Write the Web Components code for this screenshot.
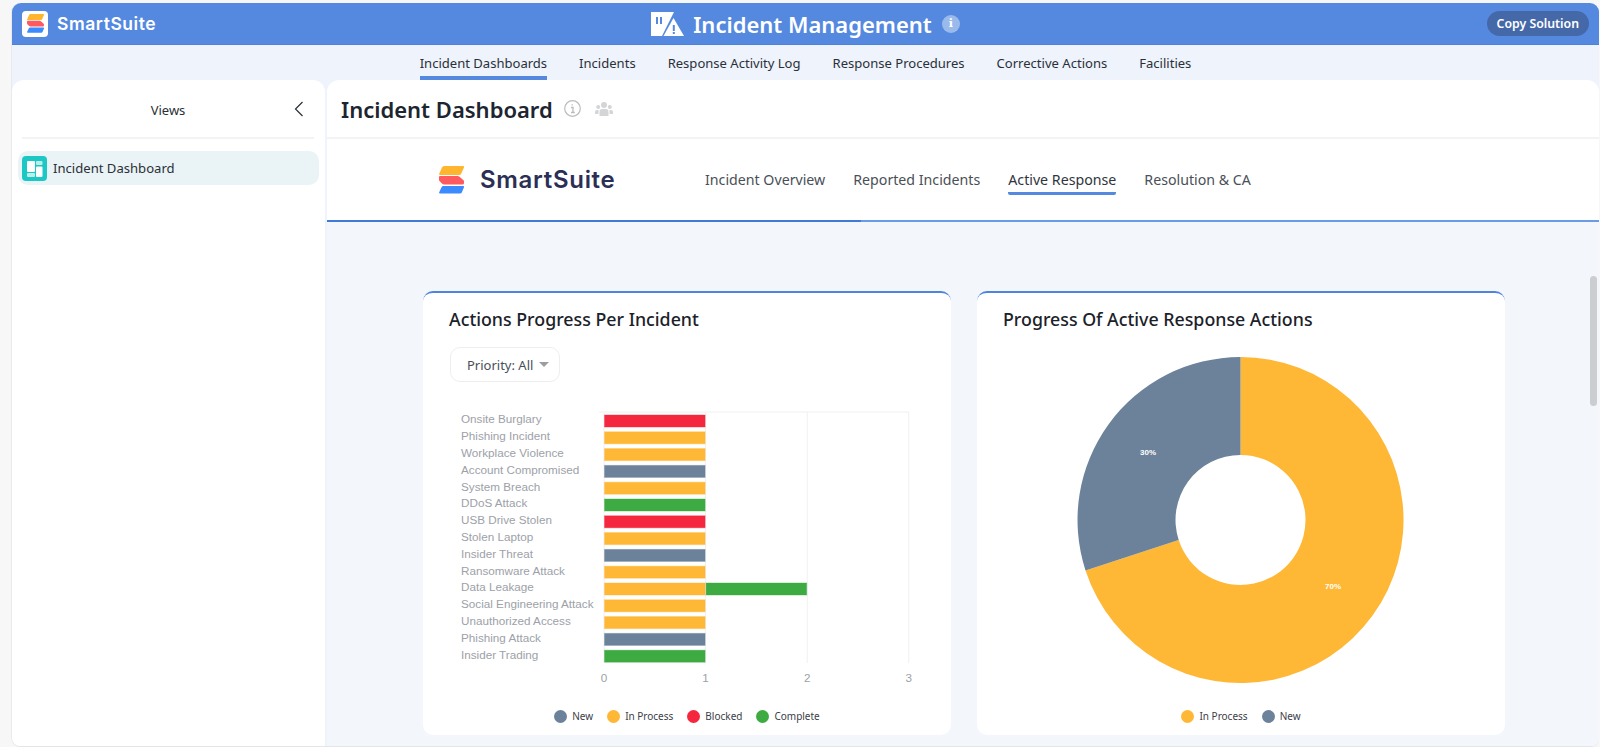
<!DOCTYPE html>
<html lang="en">
<head>
<meta charset="utf-8">
<title>Incident Management</title>
<style>
  html, body { margin: 0; height: 100%; overflow: hidden; }
  body {
    background: #f7f7f8;
    font-family: "Noto Sans", "Open Sans", sans-serif;
    color: #1f2733;
  }
</style>
</head>
<body>
<ss-app>
  <ss-header slot="header" title-text="Incident Management"></ss-header>
  <ss-tabs slot="tabs"></ss-tabs>
  <ss-sidebar slot="sidebar">
    <ss-view-item>Incident Dashboard</ss-view-item>
  </ss-sidebar>
  <ss-main slot="main" heading="Incident Dashboard">
    <ss-dash-nav></ss-dash-nav>
    <ss-dashboard>
      <ss-card heading="Actions Progress Per Incident">
        <ss-select>Priority: All</ss-select>
        <ss-bar-chart></ss-bar-chart>
        <ss-legend items="New:#6b829a,In Process:#ffb736,Blocked:#f4273f,Complete:#3dab41"></ss-legend>
      </ss-card>
      <ss-card heading="Progress Of Active Response Actions">
        <ss-donut-chart></ss-donut-chart>
        <ss-legend items="In Process:#ffb736,New:#6b829a"></ss-legend>
      </ss-card>
    </ss-dashboard>
  </ss-main>
</ss-app>

<script>
const LOGO_MARK = `
  <path d="M5 0H24Q25.500 0 25 1.500L22 8Q21.500 9 20 9H1Q-.3 9 .2 7.800L3 1.500Q3.700 0 5 0Z" fill="#ffb52e"/>
  <path d="M1 10H18.500Q19.500 10 20.500 10.800L24.500 14.200Q25 14.800 25 15.500V17Q25 18.500 23.500 18.500H5Q4 18.500 3.200 17.800L.5 15Q0 14.500 0 13.500V11Q0 10 1 10Z" fill="#ff5a5f"/>
  <path d="M4.500 20H24Q25.500 20 25 21.200L23 26Q22.500 27.500 21 27.500H1Q-.3 27.500 .2 26.200L2.500 21.200Q3.200 20 4.500 20Z" fill="#3b8bff"/>`;

class SsApp extends HTMLElement {
  constructor() {
    super();
    this.attachShadow({mode: 'open'}).innerHTML = `
    <style>
      :host {
        display: grid;
        grid-template-columns: 313px 1fr;
        grid-template-rows: 42px 35px 1fr;
        column-gap: 2px;
        height: 743px;
        margin: 3px 1px 1px 12px;
        background: #eef3fc;
        border-radius: 9px 9px 8px 8px;
        overflow: hidden;
        box-shadow: 0 1px 0 #e4e5e8, -1px 0 0 #e9eaec;
      }
      ::slotted([slot=header]), ::slotted([slot=tabs]) { grid-column: 1 / 3; }
    </style>
    <slot name="header"></slot>
    <slot name="tabs"></slot>
    <slot name="sidebar"></slot>
    <slot name="main"></slot>
    `;
  }
}

class SsHeader extends HTMLElement {
  constructor() {
    super();
    const title = this.getAttribute('title-text');
    this.attachShadow({mode: 'open'}).innerHTML = `
    <style>
      :host {
        display: grid;
        grid-template-columns: 1fr auto 1fr;
        align-items: center;
        background: #5589e0;
        border-bottom: 1px solid #4c82de;
        color: #fff;
        padding: 0 10px;
      }
      .brand { display: flex; align-items: center; gap: 9px; }
      .brand-box {
        width: 26px; height: 26px; background: #fff; border-radius: 4px;
        display: flex; align-items: center; justify-content: center;
      }
      .brand-name { font: 600 17.500px Inter, sans-serif; letter-spacing: .55px; }
      .title { display: flex; align-items: center; }
      .title h1 { font: 600 22px "Noto Sans", sans-serif; margin: 0 10px 0 9px; }
      .info {
        width: 18px; height: 18px; border-radius: 50%; background: #9bbaec;
        font: 700 11px "DejaVu Serif", serif; text-align: center; line-height: 18px;
      }
      .copy { justify-self: end; }
      .copy span {
        display: block; background: #4568a8; border-radius: 13px;
        font: 600 12.300px/25px "Noto Sans", sans-serif; padding: 0 10px;
      }
    </style>
    <div class="brand">
      <div class="brand-box"><svg width="17" height="19" viewBox="0 0 25 28">${LOGO_MARK}</svg></div>
      <div class="brand-name">SmartSuite</div>
    </div>
    <div class="title">
      <svg width="33" height="24" viewBox="0 0 33 24">
        <path d="M0 0H23L11 24H0Z" fill="#fff"/>
        <path d="M5 5H7V12H5ZM9 5H11V12H9Z" fill="#5589e0"/>
        <path d="M22.500 6 33 24H12.500Z" fill="#fff"/>
        <path d="M21.800 13H23.800V19H21.800ZM21.800 20H23.800V22H21.800Z" fill="#5589e0"/>
      </svg>
      <h1>${title}</h1>
      <div class="info">i</div>
    </div>
    <div class="copy"><span>Copy Solution</span></div>
    `;
  }
}

class SsTabs extends HTMLElement {
  constructor() {
    super();
    const names = ['Incident Dashboards', 'Incidents', 'Response Activity Log', 'Response Procedures', 'Corrective Actions', 'Facilities'];
    this.attachShadow({mode: 'open'}).innerHTML = `
    <style>
      :host {
        display: flex; justify-content: center; gap: 32px;
        background: #eef3fc;
        font: 400 13.050px "Noto Sans", sans-serif;
        color: #2a3038;
      }
      div { padding-top: 9px; box-sizing: border-box; height: 35px; }
      .on { border-bottom: 4px solid #5589e0; }
    </style>
    ${names.map((n, i) => `<div class="${i === 0 ? 'on' : ''}">${n}</div>`).join('')}
    `;
  }
}

class SsSidebar extends HTMLElement {
  constructor() {
    super();
    this.attachShadow({mode: 'open'}).innerHTML = `
    <style>
      :host {
        display: block; background: #fff; border-radius: 12px 12px 0 0;
      }
      .top {
        box-sizing: border-box; height: 59px; padding-top: 2px; margin: 0 11px 0 10px;
        border-bottom: 2px solid #f3f3f4;
        display: flex; align-items: center; justify-content: center; position: relative;
        font: 400 13px "Noto Sans", sans-serif; color: #2a3038;
      }
      .top svg { position: absolute; right: 10px; top: 21px; }
      .list { padding: 12px 6px; }
    </style>
    <div class="top">Views
      <svg width="10" height="16" viewBox="0 0 10 16" fill="none" stroke="#2a3038" stroke-width="1.200"><path d="M8.500 1 1.500 8l7 7"/></svg>
    </div>
    <div class="list"><slot></slot></div>
    `;
  }
}

class SsViewItem extends HTMLElement {
  constructor() {
    super();
    this.attachShadow({mode: 'open'}).innerHTML = `
    <style>
      :host {
        display: flex; align-items: center; gap: 6px;
        height: 34px; padding-left: 4px; border-radius: 10px;
        background: #eaf3f5;
        font: 400 13.100px "Noto Sans", sans-serif; color: #2a3038;
      }
    </style>
    <svg width="25" height="25" viewBox="0 0 25 25">
      <rect width="25" height="25" rx="4" fill="#1cc8c4"/>
      <rect x="5" y="5" width="8" height="11" rx="1" fill="#fff"/>
      <rect x="14" y="5" width="6.500" height="4" rx="1" fill="#bdeeec"/>
      <rect x="5" y="17" width="8" height="4" rx="1" fill="#bdeeec"/>
      <rect x="14" y="10.500" width="6.500" height="10.500" rx="1" fill="#fff"/>
    </svg>
    <slot></slot>
    `;
  }
}

class SsMain extends HTMLElement {
  constructor() {
    super();
    const heading = this.getAttribute('heading');
    this.attachShadow({mode: 'open'}).innerHTML = `
    <style>
      :host {
        display: flex; flex-direction: column; min-width: 0; position: relative;
        background: #fff; border-radius: 12px 12px 0 0; overflow: hidden;
      }
      .top {
        flex: none; height: 57px; padding-left: 14px;
        border-bottom: 2px solid #f3f3f4;
        display: flex; align-items: center;
      }
      h2 { font: 600 22px "Noto Sans", sans-serif; color: #1c2530; margin: 0 11px 0 0; }
      .people { margin-left: 14px; }
      .thumb {
        position: absolute; right: 2px; top: 196px;
        width: 7px; height: 130px; border-radius: 4px; background: #cbcdd1;
      }
    </style>
    <div class="top">
      <h2>${heading}</h2>
      <svg width="17" height="17" viewBox="0 0 17 17" fill="none" stroke="#bcbcbc" stroke-width="1.200">
        <circle cx="8.500" cy="8.500" r="7.800"/>
        <path d="M7 7.500H9V12.500M7 12.500H10.800M8.200 4.300V5.500" stroke-width="1.300"/>
      </svg>
      <svg class="people" width="18" height="16" viewBox="0 0 18 16" fill="#d4d5d7">
        <circle cx="9" cy="4" r="3"/><circle cx="3.200" cy="6" r="2"/><circle cx="14.800" cy="6" r="2"/>
        <path d="M4.500 15V11Q4.500 8 7 8H11Q13.500 8 13.500 11V15ZM0 13V11Q0 9 2 9H3.500V13ZM18 13V11Q18 9 16 9H14.500V13Z"/>
      </svg>
    </div>
    <slot></slot>
    <div class="thumb"></div>
    `;
  }
}

class SsDashNav extends HTMLElement {
  constructor() {
    super();
    const links = ['Incident Overview', 'Reported Incidents', 'Active Response', 'Resolution &amp; CA'];
    this.attachShadow({mode: 'open'}).innerHTML = `
    <style>
      :host {
        flex: none; display: flex; align-items: center; height: 83px; box-sizing: border-box;
        padding-left: 112px; background: #fff;
        border-bottom: 2px solid #5b8fe0;
        border-image: linear-gradient(90deg, #3f7ad6 42%, #6c9be5 42%) 1;
      }
      .logo { display: flex; align-items: center; gap: 16px; width: 266px; }
      .logo span { font: 600 24px Inter, sans-serif; letter-spacing: .7px; color: #2b2f55; }
      nav { display: flex; gap: 28px; font: 400 14.200px "Noto Sans", sans-serif; color: #4a4f57; }
      nav div { box-sizing: border-box; height: 30px; padding-top: 5px; border-bottom: 3px solid transparent; border-radius: 0 0 2px 2px; }
      nav .on { color: #30343c; border-bottom-color: #5589e0; }
    </style>
    <div class="logo">
      <svg width="25" height="28" viewBox="0 0 25 28">${LOGO_MARK}</svg>
      <span>SmartSuite</span>
    </div>
    <nav>${links.map((l, i) => `<div class="${i === 2 ? 'on' : ''}">${l}</div>`).join('')}</nav>
    `;
  }
}

class SsDashboard extends HTMLElement {
  constructor() {
    super();
    this.attachShadow({mode: 'open'}).innerHTML = `
    <style>
      :host {
        flex: 1; display: flex; gap: 26px; align-items: flex-start;
        background: #f3f6fb; padding: 69px 0 0 96px;
      }
    </style>
    <slot></slot>
    `;
  }
}

class SsCard extends HTMLElement {
  constructor() {
    super();
    const heading = this.getAttribute('heading');
    this.attachShadow({mode: 'open'}).innerHTML = `
    <style>
      :host {
        display: block; width: 528px; height: 444px; box-sizing: border-box;
        background: #fff; border-top: 2px solid #4d84de; border-radius: 10px;
        padding-top: 12px;
      }
      h3 { font: 500 17.800px/28px "Noto Sans", sans-serif; color: #1b2129; margin: 0 0 0 26px; }
    </style>
    <h3>${heading}</h3>
    <slot></slot>
    `;
  }
}

class SsSelect extends HTMLElement {
  constructor() {
    super();
    this.attachShadow({mode: 'open'}).innerHTML = `
    <style>
      :host {
        display: inline-flex; align-items: center; gap: 6px;
        box-sizing: border-box; width: 110px; height: 35px; margin: 14px 0 0 27px; padding-left: 16px;
        border: 1px solid #eeeeef; border-radius: 10px;
        font: 400 13px "Noto Sans", sans-serif; color: #4a4f57;
      }
      i { width: 0; height: 0; border: 5px solid transparent; border-top-color: #9a9da2; border-bottom: 0; }
    </style>
    <slot></slot><i></i>
    `;
  }
}

class SsBarChart extends HTMLElement {
  constructor() {
    super();
    const NEW = '#6b829a', PROC = '#ffb736', BLOCK = '#f4273f', DONE = '#3dab41';
    const rows = [
      ['Onsite Burglary', [BLOCK]], ['Phishing Incident', [PROC]], ['Workplace Violence', [PROC]],
      ['Account Compromised', [NEW]], ['System Breach', [PROC]], ['DDoS Attack', [DONE]],
      ['USB Drive Stolen', [BLOCK]], ['Stolen Laptop', [PROC]], ['Insider Threat', [NEW]],
      ['Ransomware Attack', [PROC]], ['Data Leakage', [PROC, DONE]], ['Social Engineering Attack', [PROC]],
      ['Unauthorized Access', [PROC]], ['Phishing Attack', [NEW]], ['Insider Trading', [DONE]]
    ];
    // svg origin is the card's left edge, 400px down the page
    const X0 = 181, UNIT = 101.6, TOP = 15, PITCH = 16.8;
    const grid = [0, 1, 2, 3].map(n => {
      const x = X0 + n * UNIT;
      return `<path d="M${x} 12V263" stroke="#f0f0f1"/>
        <text x="${x}" y="282" text-anchor="middle" class="tick">${n}</text>`;
    }).join('');
    const bars = rows.map(([name, parts], i) => {
      const y = TOP + i * PITCH;
      const rects = parts.map((c, k) =>
        `<rect x="${X0 + k * UNIT + .5}" y="${y}" width="${UNIT - 1}" height="12" fill="${c}" stroke="${c}" stroke-opacity=".4"/>`).join('');
      return `<text x="38" y="${y + 8.3}" class="label">${name}</text>${rects}`;
    }).join('');
    this.attachShadow({mode: 'open'}).innerHTML = `
    <style>
      :host { display: block; margin-top: 18px; height: 300px; }
      svg { display: block; }
      .label, .tick { font: 11.700px "Liberation Sans", Arial, sans-serif; fill: #9da1a8; }
    </style>
    <svg width="528" height="300" viewBox="0 0 528 300">
      <path d="M176 12H486" stroke="#f0f0f1"/>
      ${grid}
      ${bars}
    </svg>
    `;
  }
}

class SsDonutChart extends HTMLElement {
  constructor() {
    super();
    this.attachShadow({mode: 'open'}).innerHTML = `
    <style>
      :host { display: block; margin-top: 12px; height: 355px; }
      svg { display: block; }
      text { font: 700 8px "Liberation Sans", Arial, sans-serif; fill: #fff; text-anchor: middle; }
    </style>
    <svg width="528" height="355" viewBox="0 0 528 355">
      <g transform="translate(263.500 175)">
        <path d="M0 -163A163 163 0 1 1 -155 50.400L-61.800 20.100A65 65 0 1 0 0 -65Z" fill="#ffb736"/>
        <path d="M0 -163A163 163 0 0 0 -155 50.400L-61.800 20.100A65 65 0 0 1 0 -65Z" fill="#6b829a"/>
        <text x="-92.500" y="-65.500">30%</text>
        <text x="92.500" y="69">70%</text>
      </g>
    </svg>
    `;
  }
}

class SsLegend extends HTMLElement {
  constructor() {
    super();
    const items = this.getAttribute('items').split(',').map(s => s.split(':'));
    this.attachShadow({mode: 'open'}).innerHTML = `
    <style>
      :host {
        display: flex; justify-content: center; gap: 14px; height: 16px; margin-top: 8px;
        font: 400 10px/16px "Noto Sans", sans-serif; color: #3b4048;
      }
      div { display: flex; align-items: center; gap: 5px; }
      i { width: 13px; height: 13px; border-radius: 50%; }
    </style>
    ${items.map(([n, c]) => `<div><i style="background:${c}"></i>${n}</div>`).join('')}
    `;
  }
}

window.customElements.define('ss-app', SsApp);
window.customElements.define('ss-header', SsHeader);
window.customElements.define('ss-tabs', SsTabs);
window.customElements.define('ss-sidebar', SsSidebar);
window.customElements.define('ss-view-item', SsViewItem);
window.customElements.define('ss-main', SsMain);
window.customElements.define('ss-dash-nav', SsDashNav);
window.customElements.define('ss-dashboard', SsDashboard);
window.customElements.define('ss-card', SsCard);
window.customElements.define('ss-select', SsSelect);
window.customElements.define('ss-bar-chart', SsBarChart);
window.customElements.define('ss-donut-chart', SsDonutChart);
window.customElements.define('ss-legend', SsLegend);
</script>
</body>
</html>
